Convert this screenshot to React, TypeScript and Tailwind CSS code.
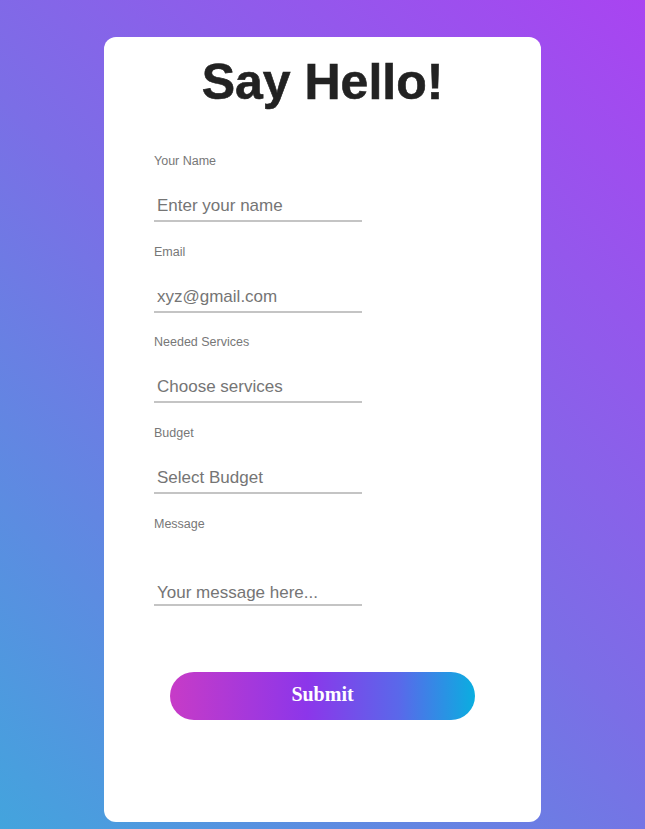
import { useState } from 'react';

const fieldLabel = 'block h-[14px] text-[12.5px] leading-[14px] text-[#777]';
const fieldInput =
  'block w-[208px] h-[30px] pl-[3px] border-0 border-b-2 border-[#c4c4c4] bg-transparent text-[17px] text-[#333] placeholder:text-[#757575] outline-none';

function Field({ label, placeholder, type = 'text' }: { label: string; placeholder: string; type?: string }) {
  const [value, setValue] = useState('');
  return (
    <div className="flex flex-col gap-[24px]">
      <label className={fieldLabel}>{label}</label>
      <input
        type={type}
        value={value}
        onChange={(e) => setValue(e.target.value)}
        placeholder={placeholder}
        className={fieldInput}
      />
    </div>
  );
}

export default function App() {
  const [message, setMessage] = useState('');

  return (
    <div className="min-h-screen pt-[37px] pb-[7px] bg-[linear-gradient(45deg,#43a4dd_0%,#7b6ee6_50%,#a944f1_100%)] font-['Liberation_Sans',Arial,sans-serif]">
      <div className="mx-auto w-[437px] h-[785px] rounded-xl bg-white pt-[21px]">
        <h1 className="text-center text-[50px] leading-[48px] font-bold text-[#222] [-webkit-text-stroke:0.6px_#222]">
          Say Hello!
        </h1>

        {/* Form */}
        <form className="mt-[48px] pl-[50px] flex flex-col gap-[22.67px]" onSubmit={(e) => e.preventDefault()}>
          <Field label="Your Name" placeholder="Enter your name" />
          <Field label="Email" placeholder="xyz@gmail.com" type="email" />
          <Field label="Needed Services" placeholder="Choose services" />
          <Field label="Budget" placeholder="Select Budget" />
          <div className="flex flex-col gap-[45px]">
            <label className={fieldLabel}>Message</label>
            <textarea
              rows={1}
              value={message}
              onChange={(e) => setMessage(e.target.value)}
              placeholder="Your message here..."
              className={`${fieldInput} resize-none pt-[7px] leading-[19px]`}
            />
          </div>
        </form>

        <div className="mt-[66px] flex justify-center">
          <button
            type="submit"
            className="w-[305px] h-[48px] pb-[4px] rounded-full bg-[linear-gradient(to_right,#c73bc7_0%,#8c36ea_45%,#5a68ea_75%,#0aaee0_100%)] text-white text-[20px] font-bold font-['Liberation_Serif','Times_New_Roman',serif]"
          >
            Submit
          </button>
        </div>
      </div>
    </div>
  );
}
